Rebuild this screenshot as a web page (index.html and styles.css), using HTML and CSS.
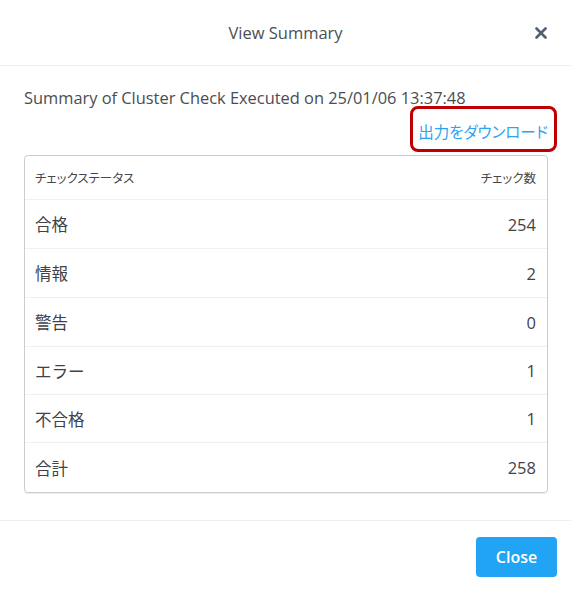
FILE: index.html
```html
<!DOCTYPE html>
<html lang="ja">
<head>
<meta charset="utf-8">
<title>View Summary</title>
<link rel="stylesheet" href="styles.css">
</head>
<body>
<div class="modal">
  <div class="header">
    <div class="title">View Summary</div>
    <button class="close-x" aria-label="close">
      <svg width="12" height="12" viewBox="0 0 12 12"><path d="M1.5 1.5 L10.5 10.5 M10.5 1.5 L1.5 10.5" stroke="#4f6075" stroke-width="2.6" stroke-linecap="round"/></svg>
    </button>
  </div>
  <div class="body">
    <div class="summary">Summary of Cluster Check Executed on 25/01/06 13:37:48</div>
    <div class="download-row">
      <a class="download" href="#">出力をダウンロード</a>
      <span class="highlight"></span>
    </div>
    <div class="table">
      <div class="row head"><span>チェックステータス</span><span>チェック数</span></div>
      <div class="row"><span>合格</span><span>254</span></div>
      <div class="row"><span>情報</span><span>2</span></div>
      <div class="row"><span>警告</span><span>0</span></div>
      <div class="row short"><span>エラー</span><span>1</span></div>
      <div class="row short"><span>不合格</span><span>1</span></div>
      <div class="row last"><span>合計</span><span>258</span></div>
    </div>
  </div>
  <div class="footer">
    <button class="btn-close">Close</button>
  </div>
</div>
</body>
</html>
```
FILE: styles.css
```css
* { box-sizing: border-box; }
html, body { margin: 0; padding: 0; background: #fff; }
body {
  font-family: "Open Sans", "Noto Sans CJK JP", sans-serif;
  color: #4a4d52;
}
.modal { width: 571px; height: 590px; display: flex; flex-direction: column; }
.header {
  height: 66px;
  border-bottom: 1px solid #eceef1;
  display: flex;
  align-items: center;
  justify-content: center;
  position: relative;
}
.title { font-size: 16.5px; color: #4b4f56; }
.close-x {
  position: absolute;
  right: 24px;
  top: 27px;
  border: 0; background: none; padding: 0; width: 12px; height: 12px;
  display: flex;
}
.body { padding: 22px 23px 27px 24px; }
.summary { font-size: 16.4px; line-height: 20px; color: #4a4d52; }
.download-row {
  display: flex;
  justify-content: flex-end;
  position: relative;
  padding: 12px 0 13px;
}
.download {
  font-family: "Noto Sans CJK JP", sans-serif;
  font-feature-settings: "palt";
  color: #2ea3f2;
  text-decoration: none;
  font-size: 15.5px;
  line-height: 22px;
}
.highlight {
  position: absolute;
  right: -9px;
  top: -2px;
  width: 147px;
  height: 46px;
  border: 3.5px solid #c00000;
  border-radius: 8px;
}
.table {
  border: 1px solid #c9cdd3;
  border-radius: 4px;
  box-shadow: 0 1px 1px rgba(0,0,0,0.08);
}
.row {
  display: flex;
  justify-content: space-between;
  align-items: center;
  height: 49px;
  padding: 0 11px 0 10px;
  border-bottom: 1px solid #eef0f2;
  font-size: 16.5px;
  color: #3f4247;
  font-family: "Noto Sans CJK JP", sans-serif;
}
.row span:last-child { font-family: "Open Sans", sans-serif; font-size: 16.5px; }
.row.head {
  height: 44px; font-size: 12.5px; color: #44474c;
  font-feature-settings: "palt";
}
.row.head span:last-child { font-family: "Noto Sans CJK JP", sans-serif; font-size: 12.5px; }
.row.short { height: 48px; }
.row.last { border-bottom: 0; height: 49px; }
.footer {
  border-top: 1px solid #eceef1;
  display: flex;
  justify-content: flex-end;
  padding: 16px 14px 0 0;
}
.btn-close {
  width: 81px;
  height: 40px;
  background: #22a4f5;
  border: 0;
  border-radius: 4px;
  color: #fff;
  font-family: "Open Sans", sans-serif;
  font-weight: 600;
  font-size: 16px;
}
```
